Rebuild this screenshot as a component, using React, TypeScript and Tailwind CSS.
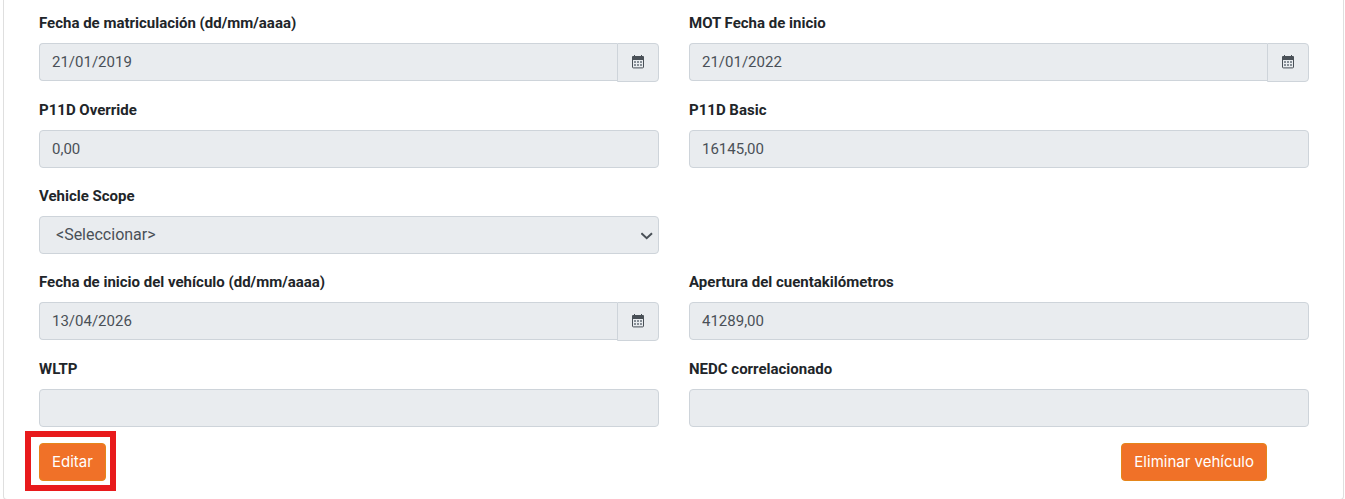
import React from 'react'

type FieldProps = {
  id: string
  label: string
  value: string
}

const CalendarIcon = () => (
  <svg
    xmlns="http://www.w3.org/2000/svg"
    className="h-[14px] w-3"
    viewBox="0 0 12 14"
    aria-hidden="true"
  >
    <path fill="#495057" d="M2 0h1v1h6V0h1v1h1q1 0 1 1v3H0V2q0-1 1-1h1z" />
    <path
      fill="none"
      stroke="#495057"
      d="M.5 4.500v7.500q0 .9.9.9h9.200q.9 0 .9-.9V4.500"
    />
    <path
      fill="#868e96"
      d="M2 6h2v2H2zM5 6h2v2H5zM8 6h2v2H8zM2 9h2v2H2zM5 9h2v2H5zM8 9h2v2H8z"
    />
  </svg>
)

const Label = ({ id, label }: { id: string; label: string }) => (
  <label htmlFor={id} className="mb-2 block leading-6 font-bold text-[#212529]">
    {label}
  </label>
)

const TextField = ({ id, label, value }: FieldProps) => (
  <div>
    <Label id={id} label={label} />
    <input
      id={id}
      type="text"
      defaultValue={value}
      readOnly
      className="block h-[38px] w-full rounded border border-[#ced4da] bg-[#e9ecef] px-3 text-[#495057]"
    />
  </div>
)

const DateField = ({ id, label, value }: FieldProps) => (
  <div>
    <Label id={id} label={label} />
    <div className="flex items-start">
      <input
        id={id}
        type="text"
        defaultValue={value}
        readOnly
        className="h-[38px] min-w-0 flex-1 rounded-l border border-r-0 border-[#ced4da] bg-[#e9ecef] px-3 text-[#495057]"
      />
      <button
        type="button"
        aria-label={label}
        className="flex h-[39px] w-[42px] items-center justify-center rounded-r border border-[#ced4da] bg-[#e9ecef] pb-0.5"
      >
        <CalendarIcon />
      </button>
    </div>
  </div>
)

const SelectField = ({ id, label, value }: FieldProps) => (
  <div>
    <Label id={id} label={label} />
    <div className="relative">
      <select
        id={id}
        className="block h-[38px] w-full appearance-none rounded border border-[#ced4da] bg-[#e9ecef] px-4 text-base text-[#495057]"
      >
        <option>{value}</option>
      </select>
      <svg
        xmlns="http://www.w3.org/2000/svg"
        className="pointer-events-none absolute top-4 right-1.5 h-2 w-3"
        viewBox="0 0 12 8"
        fill="none"
        stroke="#495057"
        strokeWidth="2"
        aria-hidden="true"
      >
        <path d="M.4 1.200 5.700 6.200 11 1.200" />
      </svg>
    </div>
  </div>
)

const App = () => {
  return (
    <div className="bg-white pr-px pl-[3px] font-['Roboto',sans-serif] text-[15px]">
      <form className="rounded-b border border-t-0 border-[#dfdfdf] pt-[11px] pr-[34px] pb-[18px] pl-[35px]">
        <div className="grid grid-cols-2 gap-x-[30px] gap-y-4">
          <DateField
            id="registration"
            label="Fecha de matriculación (dd/mm/aaaa)"
            value="21/01/2019"
          />
          <DateField id="mot" label="MOT Fecha de inicio" value="21/01/2022" />
          <TextField id="p11d-override" label="P11D Override" value="0,00" />
          <TextField id="p11d-basic" label="P11D Basic" value="16145,00" />
          <div className="col-span-2 grid grid-cols-2 gap-x-[30px]">
            <SelectField
              id="scope"
              label="Vehicle Scope"
              value="<Seleccionar>"
            />
          </div>
          <DateField
            id="start"
            label="Fecha de inicio del vehículo (dd/mm/aaaa)"
            value="13/04/2026"
          />
          <TextField
            id="odometer"
            label="Apertura del cuentakilómetros"
            value="41289,00"
          />
          <TextField id="wltp" label="WLTP" value="" />
          <TextField id="nedc" label="NEDC correlacionado" value="" />
        </div>
        <div className="mt-4 flex justify-between pr-[42px] font-['Inter',sans-serif]">
          <div className="relative">
            <button
              type="button"
              className="h-[38px] rounded border border-[#e5861a] bg-[#f07128] px-3 text-white"
            >
              Editar
            </button>
            {/* highlight frame around the edit button */}
            <div className="pointer-events-none absolute -top-3 -right-2.5 -bottom-2.5 -left-3.5 border-6 border-[#e81a1c]" />
          </div>
          <button
            type="button"
            className="h-[38px] rounded border border-[#e5861a] bg-[#f07128] px-3 text-white"
          >
            Eliminar vehículo
          </button>
        </div>
      </form>
    </div>
  )
}

export default App
